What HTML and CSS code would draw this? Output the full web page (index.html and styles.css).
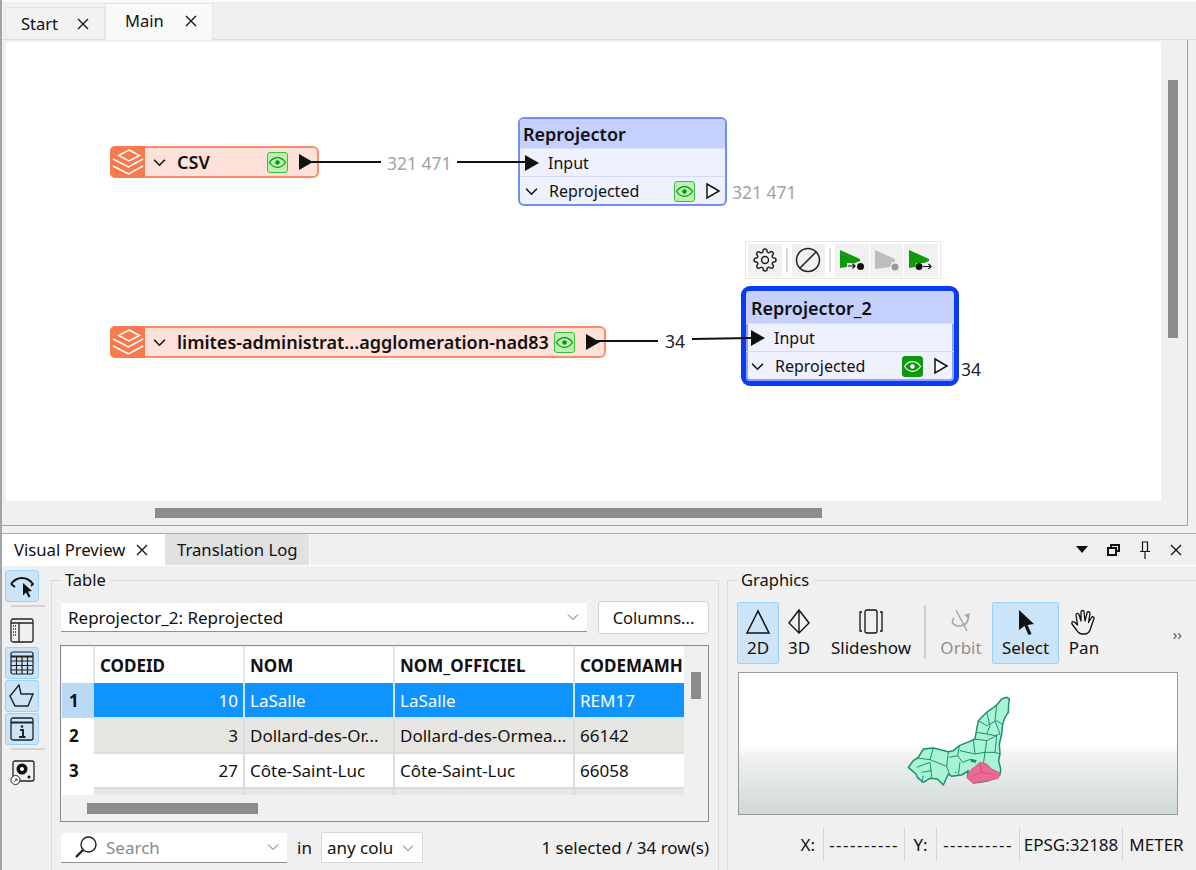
FILE: index.html
```html
<!DOCTYPE html>
<html lang="en">
    <head>
        <meta charset="UTF-8" />
        <title>Workbench</title>
        <link rel="stylesheet" href="styles.css">
    </head>
    <body>
        <svg class="defs" width="0" height="0">
            <symbol id="eye" viewBox="0 0 19 19">
                <path d="M1.500 9.500c2-3 5-4.800 8-4.800s6 1.800 8 4.800c-2 3-5 4.800-8 4.800s-6-1.800-8-4.800z" fill="none" stroke="currentColor" stroke-width="1.200" />
                <circle cx="9.500" cy="9.500" r="2.200" fill="currentColor" />
            </symbol>
            <symbol id="layers" viewBox="0 0 35 31">
                <path d="M19 4l10.500 5.500L19 15 8.500 9.500z" fill="none" stroke="#fff" stroke-width="1.500" />
                <path d="M3 13l15.500 8L33 13M3 20l15.500 8L33 20" fill="none" stroke="#fff" stroke-width="1.500" />
            </symbol>
            <symbol id="close" viewBox="0 0 12 12">
                <path d="M1 1l10 10M11 1L1 11" fill="none" stroke="currentColor" stroke-width="1.300" />
            </symbol>
            <symbol id="chev" viewBox="0 0 12 8">
                <path d="M1 1.500l5 5 5-5" fill="none" stroke="currentColor" stroke-width="1.500" />
            </symbol>
            <symbol id="small-chev" viewBox="0 0 12 8">
                <path d="M1 1.500l5 5 5-5" fill="none" stroke="#666" stroke-width="1" />
            </symbol>
        </svg>

        <div class="tabbar">
            <div class="tab">Start <svg class="tab-x"><use href="#close" /></svg></div>
            <div class="tab tab-active">Main <svg class="tab-x"><use href="#close" /></svg></div>
        </div>

        <div class="editor">
            <div class="sheet">
                <div class="wire-label count-a">321 471</div>
                <div class="wire-label count-b">321 471</div>
                <div class="wire-label dark count-c">34</div>
                <div class="wire-label dark count-d">34</div>

                <div class="source source-csv">
                    <div class="source-icon"><svg width="35" height="31"><use href="#layers" /></svg></div>
                    <svg class="chev"><use href="#chev" /></svg>
                    <span class="source-name">CSV</span>
                    <svg class="eye-btn"><use href="#eye" /></svg>
                    <div class="port-out"></div>
                </div>

                <div class="source source-limits">
                    <div class="source-icon"><svg width="35" height="31"><use href="#layers" /></svg></div>
                    <svg class="chev"><use href="#chev" /></svg>
                    <span class="source-name">limites-administrat...agglomeration-nad83</span>
                    <svg class="eye-btn"><use href="#eye" /></svg>
                    <div class="port-out"></div>
                </div>

                <div class="node node-first">
                    <div class="node-title">Reprojector</div>
                    <div class="node-row"><div class="port-in"></div><span>Input</span></div>
                    <div class="node-row">
                        <svg class="chev"><use href="#chev" /></svg>
                        <span>Reprojected</span>
                        <svg class="eye-btn"><use href="#eye" /></svg>
                        <svg class="port-hollow" viewBox="0 0 16 18"><path d="M2 2l12 7-12 7z" fill="#fff" stroke="#111" stroke-width="1.500" /></svg>
                    </div>
                </div>

                <div class="node-tools">
                    <div class="ntool">
                        <svg width="24" height="24" viewBox="0 0 24 24" fill="none" stroke="#222" stroke-width="1.500">
                            <circle cx="12" cy="12" r="3.500" />
                            <path d="M19.400 15a1.650 1.650 0 0 0 .33 1.820l.06.06a2 2 0 0 1 0 2.830 2 2 0 0 1-2.830 0l-.06-.06a1.650 1.650 0 0 0-1.820-.33 1.650 1.650 0 0 0-1 1.510V21a2 2 0 0 1-2 2 2 2 0 0 1-2-2v-.09A1.650 1.650 0 0 0 9 19.400a1.650 1.650 0 0 0-1.820.33l-.06.06a2 2 0 0 1-2.830 0 2 2 0 0 1 0-2.830l.06-.06a1.650 1.650 0 0 0 .33-1.820 1.650 1.650 0 0 0-1.510-1H3a2 2 0 0 1-2-2 2 2 0 0 1 2-2h.09A1.650 1.650 0 0 0 4.600 9a1.650 1.650 0 0 0-.33-1.820l-.06-.06a2 2 0 0 1 0-2.830 2 2 0 0 1 2.830 0l.06.06a1.650 1.650 0 0 0 1.820.33H9a1.650 1.650 0 0 0 1-1.510V3a2 2 0 0 1 2-2 2 2 0 0 1 2 2v.09a1.650 1.650 0 0 0 1 1.510 1.650 1.650 0 0 0 1.820-.33l.06-.06a2 2 0 0 1 2.830 0 2 2 0 0 1 0 2.830l-.06.06a1.650 1.650 0 0 0-.33 1.820V9a1.650 1.650 0 0 0 1.510 1H21a2 2 0 0 1 2 2 2 2 0 0 1-2 2h-.09a1.650 1.650 0 0 0-1.510 1z" />
                        </svg>
                    </div>
                    <div class="ntool-sep"></div>
                    <div class="ntool">
                        <svg width="26" height="26" viewBox="0 0 26 26" fill="none" stroke="#222" stroke-width="1.500">
                            <circle cx="13" cy="13" r="11.500" />
                            <path d="M5 21L21 5" />
                        </svg>
                    </div>
                    <div class="ntool-sep"></div>
                    <div class="ntool">
                        <svg width="28" height="26" viewBox="0 0 28 26">
                            <path d="M2 3l20 9v2l-5 2H9v4l-7 1z" fill="#0d9b0d" />
                            <path d="M10 19h7M14.500 16.500l2.500 2.500-2.500 2.500" fill="none" stroke="#111" stroke-width="1.200" />
                            <circle cx="22.500" cy="19.500" r="3.500" fill="#111" />
                        </svg>
                    </div>
                    <div class="ntool">
                        <svg width="28" height="26" viewBox="0 0 28 26">
                            <path d="M2 3l20 9v3h-3l-2 5-15 2z" fill="#bdbdbd" />
                            <circle cx="22" cy="20" r="3.500" fill="#9a9a9a" />
                        </svg>
                    </div>
                    <div class="ntool">
                        <svg width="28" height="26" viewBox="0 0 28 26">
                            <path d="M2 3l20 9v2l-5 2H9l-1 4-6 1z" fill="#0d9b0d" />
                            <circle cx="12" cy="19.500" r="3.500" fill="#111" />
                            <path d="M16 19.500h8M21.500 17l2.500 2.500-2.500 2.500" fill="none" stroke="#111" stroke-width="1.200" />
                        </svg>
                    </div>
                </div>

                <div class="node node-second">
                    <div class="node-title">Reprojector_2</div>
                    <div class="node-row"><div class="port-in"></div><span>Input</span></div>
                    <div class="node-row">
                        <svg class="chev"><use href="#chev" /></svg>
                        <span>Reprojected</span>
                        <svg class="eye-btn eye-on"><use href="#eye" /></svg>
                        <svg class="port-hollow" viewBox="0 0 16 18"><path d="M2 2l12 7-12 7z" fill="#fff" stroke="#111" stroke-width="1.500" /></svg>
                    </div>
                </div>

                <svg class="wires" width="1155" height="459">
                    <path d="M299 120h76M451 120h68M585 299h67M686 297l60-1" fill="none" stroke="#111" stroke-width="2" />
                </svg>
            </div>
            <div class="vscroll"><div class="vthumb"></div></div>
            <div class="hscroll"><div class="hthumb"></div></div>
        </div>

        <div class="dock">
            <div class="dock-tabs">
                <div class="dock-tab dock-tab-active">Visual Preview <svg class="tab-x"><use href="#close" /></svg></div>
                <div class="dock-tab">Translation Log</div>
                <div class="dock-controls">
                    <svg width="12" height="7" viewBox="0 0 12 7"><path d="M0 0h12L6 7z" fill="#111" /></svg>
                    <svg width="13" height="12" viewBox="0 0 13 12" fill="none" stroke="#111" stroke-width="2"><path d="M4 3V1h8v6h-3" /><path d="M1 4h8v7H1z" /></svg>
                    <svg width="12" height="18" viewBox="0 0 12 18" fill="none" stroke="#111" stroke-width="1.200"><path d="M3.500 10V1h5v9M1 10.500h10M6 11v7" /></svg>
                    <svg width="12" height="12"><use href="#close" /></svg>
                </div>
            </div>

            <div class="dock-body">
                <div class="side-tools">
                    <div class="side-btn on">
                        <svg width="26" height="24" viewBox="0 0 26 24" fill="none" stroke="#111" stroke-width="1.800">
                            <path d="M2 10c3-4 7-6 11-6s8 2 11 6l-2 2M6 13l-4-3" />
                            <path d="M14 9l9 8-4 .5 2.500 5-2 1-2.500-5-3 3z" fill="#111" stroke="none" />
                        </svg>
                    </div>
                    <div class="side-sep"></div>
                    <div class="side-btn">
                        <svg width="24" height="25" viewBox="0 0 24 25" fill="none" stroke="#222" stroke-width="1.300">
                            <rect x="1" y="1" width="22" height="23" rx="2" />
                            <path d="M1 5h22M9 5v19" />
                            <path d="M3 8h4M3 11h4M3 14h4M3 17h4" stroke-dasharray="1 1" />
                        </svg>
                    </div>
                    <div class="side-btn on">
                        <svg width="24" height="24" viewBox="0 0 24 24" fill="none" stroke="#222" stroke-width="1.200">
                            <rect x="1" y="1" width="22" height="22" rx="2" />
                            <path d="M1 5.500h22" stroke-width="2" />
                            <path d="M1 10h22M1 14.500h22M1 19h22M6.500 5v18M12 5v18M17.500 5v18" />
                        </svg>
                    </div>
                    <div class="side-btn on">
                        <svg width="26" height="24" viewBox="0 0 26 24" fill="none" stroke="#222" stroke-width="1.400">
                            <path d="M1 12L10 1l2 9h12l-5 12H6z" />
                        </svg>
                    </div>
                    <div class="side-btn on">
                        <svg width="24" height="24" viewBox="0 0 24 24" fill="none" stroke="#222" stroke-width="1.300">
                            <rect x="1" y="1" width="22" height="22" rx="2" />
                            <path d="M1 5.500h22" stroke-width="2" />
                            <path d="M10 13h3v7M9 20h6.500" stroke-width="2" />
                            <circle cx="12" cy="9.500" r="1.300" fill="#222" stroke="none" />
                        </svg>
                    </div>
                    <div class="side-sep"></div>
                    <div class="side-btn">
                        <svg width="25" height="26" viewBox="0 0 25 26">
                            <rect x="3" y="1" width="21" height="20" rx="2" fill="none" stroke="#222" stroke-width="1.300" />
                            <circle cx="12" cy="9" r="5.500" fill="#111" />
                            <circle cx="12" cy="9" r="2" fill="#fff" />
                            <circle cx="19" cy="17" r="1.500" fill="#111" />
                            <circle cx="5.500" cy="20" r="4.500" fill="#fff" stroke="#222" stroke-width="1" />
                            <path d="M4 22l3-3M5 19h2v2" fill="none" stroke="#222" stroke-width=".8" />
                        </svg>
                    </div>
                </div>

                <fieldset class="group group-table">
                    <legend>Table</legend>
                    <div class="source-row">
                        <div class="combo combo-source">
                            <span>Reprojector_2: Reprojected</span>
                            <svg class="small-chev"><use href="#small-chev" /></svg>
                        </div>
                        <div class="columns-btn">Columns...</div>
                    </div>
                    <div class="table-frame">
                        <div class="table-clip">
                            <table class="data">
                                <colgroup>
                                    <col class="col-head" /><col class="col-id" /><col class="col-nom" /><col class="col-off" /><col class="col-code" />
                                </colgroup>
                                <thead>
                                    <tr><th></th><th>CODEID</th><th>NOM</th><th>NOM_OFFICIEL</th><th>CODEMAMH</th></tr>
                                </thead>
                                <tbody>
                                    <tr class="selected"><th>1</th><td class="num">10</td><td>LaSalle</td><td>LaSalle</td><td>REM17</td></tr>
                                    <tr class="alt"><th>2</th><td class="num">3</td><td>Dollard-des-Or...</td><td>Dollard-des-Ormea...</td><td>66142</td></tr>
                                    <tr><th>3</th><td class="num">27</td><td>Côte-Saint-Luc</td><td>Côte-Saint-Luc</td><td>66058</td></tr>
                                    <tr class="alt"><th></th><td></td><td></td><td></td><td></td></tr>
                                </tbody>
                            </table>
                        </div>
                        <div class="t-vthumb"></div>
                        <div class="t-hthumb"></div>
                    </div>
                    <div class="filter-row">
                        <div class="combo combo-search">
                            <svg width="26" height="26" viewBox="0 0 26 26" fill="none" stroke="#222">
                                <circle cx="15.500" cy="10.500" r="7.500" stroke-width="1.400" />
                                <path d="M10 16l-7 7" stroke-width="2.400" />
                            </svg>
                            <span class="placeholder">Search</span>
                            <svg class="small-chev"><use href="#small-chev" /></svg>
                        </div>
                        <span class="in-label">in</span>
                        <div class="combo combo-col">
                            <span>any colu</span>
                            <svg class="small-chev"><use href="#small-chev" /></svg>
                        </div>
                        <span class="row-count">1 selected / 34 row(s)</span>
                    </div>
                </fieldset>

                <fieldset class="group group-graphics">
                    <legend>Graphics</legend>
                    <div class="gtools">
                        <div class="gtool gtool-2d on">
                            <svg width="26" height="28" viewBox="0 0 26 28" fill="none" stroke="#111" stroke-width="1.500"><path d="M13 3L2 25h22z" /></svg>
                            <span>2D</span>
                        </div>
                        <div class="gtool gtool-3d">
                            <svg width="24" height="28" viewBox="0 0 24 28" fill="none" stroke="#111" stroke-width="1.400"><path d="M12 2L2 15l10 10 10-10zM12 2v23" /></svg>
                            <span>3D</span>
                        </div>
                        <div class="gtool gtool-slide">
                            <svg width="26" height="28" viewBox="0 0 26 28" fill="none" stroke="#111" stroke-width="1.300"><rect x="7" y="2" width="12" height="23" rx="2" /><path d="M4 4H2v19h2M22 4h2v19h-2" /></svg>
                            <span>Slideshow</span>
                        </div>
                        <div class="gtool-sep"></div>
                        <div class="gtool gtool-orbit off">
                            <svg width="26" height="28" viewBox="0 0 26 28" fill="none" stroke="#a8a8a8" stroke-width="1.500">
                                <path d="M8 2l11 21" />
                                <path d="M6 10c-4 5 0 8 6 8 6-1 9-5 8-11" />
                                <path d="M16 7l6-2-1 6z" fill="#a8a8a8" stroke="none" />
                            </svg>
                            <span>Orbit</span>
                        </div>
                        <div class="gtool gtool-select on">
                            <svg width="20" height="28" viewBox="0 0 20 28"><path d="M3 2l15 14-6.500 1 4 9-3 1-4-9-5.500 4z" fill="#111" /></svg>
                            <span>Select</span>
                        </div>
                        <div class="gtool gtool-pan">
                            <svg width="28" height="28" viewBox="0 0 28 28" fill="none" stroke="#111" stroke-width="1.300" stroke-linejoin="round">
                                <path d="M8 24l-6-8c-1-2 1-3 2.500-2l3 3L6 7c0-2 2.500-2 3-.5L11 13 11 4c0-2 3-2 3 0l1 9 2-8c.5-2 3-1.500 3 .5l-1.500 9 3-5c1-1.500 3-.5 2.500 1L20 22c-1 3-3 4-6 4h-2c-2 0-3-1-4-2z" />
                            </svg>
                            <span>Pan</span>
                        </div>
                        <div class="more">››</div>
                    </div>
                    <div class="map">
                        <svg width="160" height="110" viewBox="0 0 480 330">
                            <path d="M380 55l8 5-2 15-1 25-10 15-7 20-3 30-7 30 2 30-4 20 6 25-2 18-15 10-20 7-25 5-20 2-18-17 3-20-20 13-30 4-10-7-15 33-18-18-22-2-20 12-18-15-4-10-23-20 15-20 15-10 15-25 30-3 45 11 15-3 18-15 24-10 23-10 5-30 5-25 25-25 30-22 15-18z" fill="#a8f4d4" stroke="#1d8f6e" stroke-width="4.500" stroke-linejoin="round" />
                            <path d="M295 125l25 15 30-15 15 10M320 100l10 40-10 25-30-5M350 78l-5 47 15 40M320 165l25 5 15-5M285 180l35 5 30-15M280 180l5 45-45-10M320 185l-5 35-30 5M350 170l-5 50-30 0M315 220l-5 35M345 220l15 5M238 200l-5 30 15 20 25-10 15 10M205 218l-5 45 10 25M160 207l-10 35-40-5M150 242l50 20M110 265l40-15 5 45M125 280l30-5M130 290l-5 20M233 230l-25 5M240 250l-5 38M225 280h5" fill="none" stroke="#1d8f6e" stroke-width="3" />
                            <path d="M272 240l18 3-3 8-15-3z" fill="#1d8f6e" />
                            <path d="M300 250l20 5 15 15 25 12-5 16-35 7-40 7-18-17 8-20z" fill="#ea6a94" stroke="#e8588a" stroke-width="3" stroke-linejoin="round" />
                            <path d="M300 255l5 25-25 10M305 280l30 5" fill="none" stroke="#c0486f" stroke-width="2" />
                        </svg>
                    </div>
                    <div class="status">
                        <div class="st st-x">X:</div>
                        <div class="st st-xv">----------</div>
                        <div class="st st-y">Y:</div>
                        <div class="st st-yv">----------</div>
                        <div class="st st-epsg">EPSG:32188</div>
                        <div class="st st-unit">METER</div>
                    </div>
                </fieldset>
            </div>
        </div>
    </body>
</html>
```
FILE: styles.css
```css
* {
    box-sizing: border-box;
}

html,
body {
    margin: 0;
    padding: 0;
}

body {
    width: 1196px;
    height: 870px;
    overflow: hidden;
    display: flex;
    flex-direction: column;
    background: #f0f0f0;
    border-left: 2px solid #a3a3a3;
    font-family: "Noto Sans", "Open Sans", sans-serif;
    font-size: 17px;
    color: #111;
}

.defs {
    position: absolute;
}

svg {
    display: block;
    flex: none;
}

/* top tabs */
.tabbar {
    height: 40px;
    flex: none;
    display: flex;
    align-items: flex-end;
    padding-left: 3px;
    border-top: 2px solid #fbfbfb;
    border-bottom: 1px solid #dedede;
}

.tab {
    width: 100px;
    height: 32px;
    display: flex;
    align-items: center;
    padding-left: 15px;
    font-size: 16.500px;
    background: #f2f2f2;
    border: 1px solid #e4e4e4;
    border-bottom: none;
}

.tab-active {
    width: 108px;
    height: 37px;
    margin-bottom: -1px;
    padding-left: 19px;
    padding-bottom: 3px;
    background: #f9f9f9;
}

.tab-x {
    width: 12px;
    height: 12px;
    margin-left: 19px;
}

.tab-active .tab-x {
    margin-left: 21px;
}

/* editor canvas */
.editor {
    height: 486px;
    flex: none;
    margin-right: 8px;
    display: grid;
    grid-template-columns: 1155px 1fr;
    grid-template-rows: 459px 1fr;
    padding-left: 4px;
    padding-top: 2px;
    border-right: 1px solid #a0a0a0;
    border-bottom: 1px solid #a0a0a0;
}

.sheet {
    position: relative;
    background: #fff;
    overflow: hidden;
}

.wires {
    position: absolute;
    left: 0;
    top: 0;
}

.wire-label {
    position: absolute;
    line-height: 20px;
    font-size: 17.500px;
    color: #a3a3a3;
}

.wire-label.dark {
    color: #222;
}

.count-a { left: 381px; top: 111px; }
.count-b { left: 726px; top: 140px; }
.count-c { left: 659px; top: 289px; }
.count-d { left: 955px; top: 317px; }

.source {
    position: absolute;
    height: 32px;
    display: flex;
    align-items: center;
    background: #fee2da;
    border: 2px solid #fb8d6b;
    border-radius: 6px;
    font-size: 18px;
}

.source-csv { left: 104px; top: 104px; width: 209px; }
.source-limits { left: 104px; top: 284px; width: 496px; }

.source-icon {
    width: 35px;
    height: 32px;
    flex: none;
    margin-left: -2px;
    background: #f97a4c;
    border-radius: 5px 0 0 5px;
}

.source .chev {
    margin-left: 8px;
}

.source-name {
    margin-left: 11px;
    white-space: nowrap;
    font-weight: 600;
}

.chev {
    width: 13px;
    height: 9px;
    flex: none;
}

.eye-btn {
    width: 21px;
    height: 21px;
    flex: none;
    color: #0d8f0d;
    background: #b9f2b0;
    border: 1px solid #3dbb3d;
    border-radius: 3px;
}

.eye-on {
    color: #fff;
    background: #0a9a0a;
    border-color: #0a9a0a;
}

.source .eye-btn {
    margin-left: auto;
    margin-right: 11px;
}

.port-out {
    width: 0;
    height: 0;
    flex: none;
    margin-right: 4px;
    border-left: 14px solid #111;
    border-top: 8px solid transparent;
    border-bottom: 8px solid transparent;
}

.node {
    position: absolute;
    width: 209px;
    background: #eff1ff;
    border: 2px solid #6f8ff0;
    border-radius: 6px;
    overflow: hidden;
}

.node-first { left: 512px; top: 75px; height: 89px; }

.node-second {
    left: 735px;
    top: 244px;
    width: 218px;
    height: 100px;
    border: 5px solid #0a3cf5;
    border-radius: 9px;
    box-shadow: inset 0 0 0 2px #8fa6f5;
}

.node-title {
    height: 30px;
    display: flex;
    align-items: center;
    padding-left: 3px;
    font-size: 18px;
    font-weight: 600;
    background: #c6d0ff;
    border-bottom: 1px solid #dce1fb;
}

.node-second .node-title {
    height: 33px;
    padding-top: 2px;
    padding-left: 5px;
}

.node-row {
    height: 28px;
    display: flex;
    align-items: center;
    padding-left: 5px;
    border-bottom: 1px solid #d3d9fb;
    font-size: 16px;
}

.node-row:last-child {
    border-bottom: none;
}

.node-row span {
    margin-left: 11px;
}

.node-row .eye-btn {
    margin-left: auto;
    margin-right: 10px;
}

.port-in {
    width: 0;
    height: 0;
    flex: none;
    border-left: 14px solid #111;
    border-top: 8px solid transparent;
    border-bottom: 8px solid transparent;
}

.node-row .port-in + span {
    margin-left: 9px;
}

.port-hollow {
    width: 16px;
    height: 18px;
    margin-right: 4px;
}

.node-second .port-hollow {
    margin-right: 5px;
}

.node-tools {
    position: absolute;
    left: 739px;
    top: 199px;
    width: 196px;
    height: 38px;
    display: flex;
    align-items: center;
    gap: 1px;
    padding: 2px 2px;
    background: #fff;
    border: 1px solid #e6e6e6;
}

.ntool {
    width: 34px;
    height: 33px;
    display: flex;
    align-items: center;
    justify-content: center;
    background: #f1f1f1;
}

.ntool-sep {
    width: 2px;
    height: 24px;
    margin: 0 3px;
    background: #d8d8d8;
}

.vthumb {
    width: 10px;
    height: 258px;
    margin: 38px 0 0 7px;
    background: #8c8c8c;
}

.hscroll {
    grid-column: 1 / 3;
}

.hthumb {
    width: 667px;
    height: 10px;
    margin: 7px 0 0 149px;
    background: #8c8c8c;
}

/* bottom dock */
.dock {
    flex: 1;
    margin-top: 7px;
    display: flex;
    flex-direction: column;
    border-top: 1px solid #a9a9a9;
    min-height: 0;
}

.dock-tabs {
    height: 32px;
    flex: none;
    display: flex;
    border-bottom: 1px solid #fff;
}

.dock-tab {
    width: 145px;
    display: flex;
    align-items: center;
    padding-left: 12px;
    font-size: 16.700px;
    background: #e1e1e1;
    border-right: 1px solid #fafafa;
}

.dock-tab-active {
    width: 163px;
    background: #fff;
    border-right: none;
}

.dock-tab-active .tab-x {
    margin-left: 11px;
}

.dock-controls {
    margin-left: auto;
    display: flex;
    align-items: center;
    gap: 19px;
    padding-right: 14px;
}

.dock-body {
    flex: 1;
    display: flex;
    min-height: 0;
}

.side-tools {
    width: 49px;
    flex: none;
    padding: 4px 0 0 3px;
}

.side-btn {
    width: 34px;
    height: 32px;
    display: flex;
    align-items: center;
    justify-content: center;
    margin-bottom: 1px;
    border: 1px solid transparent;
}

.side-btn.on {
    background: #cce4f7;
    border-color: #99d1ff;
    border-radius: 3px;
}

.side-sep {
    height: 2px;
    margin: 3px 6px 7px;
    background: #d4d4d4;
}

.group {
    margin: 3px 0 0;
    padding: 0;
    border: 1px solid #dadada;
    border-bottom: none;
    min-width: 0;
}

.group legend {
    padding: 0 4px;
    margin-left: 0;
    line-height: 22px;
    font-size: 16.500px;
}

.group-table {
    width: 668px;
    padding: 10px 9px 0 9px;
}

.group-graphics {
    width: 469px;
    margin-left: 8px;
    border-right: none;
    padding: 11px 17px 0 9px;
}

.source-row {
    display: flex;
    align-items: center;
    gap: 11px;
    height: 33px;
}

.combo {
    display: flex;
    align-items: center;
    background: #fff;
    white-space: nowrap;
}

.combo-source {
    width: 526px;
    height: 29px;
    padding: 0 8px 0 7px;
    border-bottom: 1px solid #8d8d8d;
}

.small-chev {
    width: 12px;
    height: 8px;
    margin-left: auto;
}

.columns-btn {
    width: 111px;
    height: 33px;
    display: flex;
    align-items: center;
    justify-content: center;
    background: #fff;
    border: 1px solid #d0d0d0;
    border-radius: 4px;
    font-size: 16.500px;
}

.table-frame {
    position: relative;
    height: 177px;
    margin: 11px 0 0 -1px;
    border: 1px solid #8a8a96;
    padding: 1px;
}

.table-clip {
    width: 622px;
    height: 148px;
    overflow: hidden;
    background: #fff;
}

.data {
    width: 630px;
    table-layout: fixed;
    border-collapse: collapse;
}

.col-head { width: 32px; }
.col-id { width: 150px; }
.col-nom { width: 150px; }
.col-off { width: 180px; }
.col-code { width: 118px; }

.data th,
.data td {
    padding: 0 5px;
    text-align: left;
    white-space: nowrap;
    overflow: hidden;
    border-right: 2px solid #dcdcdc;
    border-bottom: 2px solid #dcdcdc;
}

.data thead th {
    height: 36px;
    font-weight: 700;
    border-bottom: none;
    border-right: 2px solid #e6e6e6;
    background: #fff;
}

.data tbody tr {
    height: 35px;
}

.data tbody th {
    font-weight: 700;
    background: #fff;
    padding-left: 7px;
    border: none;
}

.data .num {
    text-align: right;
}

.data .selected td {
    background: #0f94ff;
    color: #fff;
    border-color: #cfe6fa;
}

.data .selected th {
    background: #b9d9f4;
}

.data .alt td {
    background: #e8e6e3;
}

.t-vthumb {
    position: absolute;
    left: 630px;
    top: 26px;
    width: 10px;
    height: 27px;
    background: #8c8c8c;
}

.t-hthumb {
    position: absolute;
    left: 26px;
    top: 157px;
    width: 171px;
    height: 11px;
    background: #8c8c8c;
}

.filter-row {
    display: flex;
    align-items: center;
    height: 31px;
    margin-top: 10px;
}

.combo-search {
    width: 226px;
    height: 30px;
    padding: 0 8px 0 12px;
    border-bottom: 1px solid #8d8d8d;
}

.placeholder {
    margin-left: 7px;
    color: #8a8a8a;
}

.in-label {
    margin-left: 10px;
    margin-right: 9px;
}

.combo-col {
    width: 102px;
    height: 31px;
    padding: 0 8px 0 5px;
    border: 1px solid #d6d6d6;
    border-radius: 2px;
}

.row-count {
    margin-left: auto;
}

.gtools {
    display: flex;
    align-items: stretch;
    height: 62px;
}

.gtool {
    display: flex;
    flex-direction: column;
    align-items: center;
    justify-content: center;
    line-height: 20px;
    border: 1px solid transparent;
    white-space: nowrap;
}

.gtool span {
    margin-top: 2px;
}

.gtool.on {
    background: #cce4f7;
    border-color: #99d1ff;
    border-radius: 2px;
}

.gtool.off {
    color: #8f8f8f;
}

.gtool-2d { width: 42px; }
.gtool-3d { width: 40px; }
.gtool-slide { width: 104px; }
.gtool-orbit { width: 62px; margin-left: 4px; }
.gtool-select { width: 67px; }
.gtool-pan { width: 50px; }

.gtool-sep {
    width: 2px;
    height: 54px;
    margin: 3px 0 0 1px;
    background: #d0d0d0;
}

.more {
    margin-left: auto;
    margin-right: -3px;
    align-self: center;
    margin-top: 2px;
    color: #555;
    font-size: 15px;
}

.map {
    height: 143px;
    margin: 8px 1px 0;
    display: flex;
    align-items: flex-start;
    justify-content: center;
    padding-top: 6px;
    padding-left: 4px;
    border: 1px solid #9a9a9a;
    background: linear-gradient(#fff 50%, #f0f2f2 60%, #cfd7d7);
}

.status {
    display: flex;
    justify-content: flex-end;
    height: 33px;
    margin-top: 13px;
    margin-right: -11px;
}

.st {
    display: flex;
    align-items: center;
    justify-content: center;
    border-left: 1px solid #d4d4d4;
}

.st-x { width: 40px; border-left: none; justify-content: flex-end; padding-right: 8px; }
.st-xv { width: 81px; letter-spacing: 1.500px; }
.st-y { width: 32px; }
.st-yv { width: 83px; letter-spacing: 1.500px; }
.st-epsg { width: 103px; }
.st-unit { width: 68px; }
```
